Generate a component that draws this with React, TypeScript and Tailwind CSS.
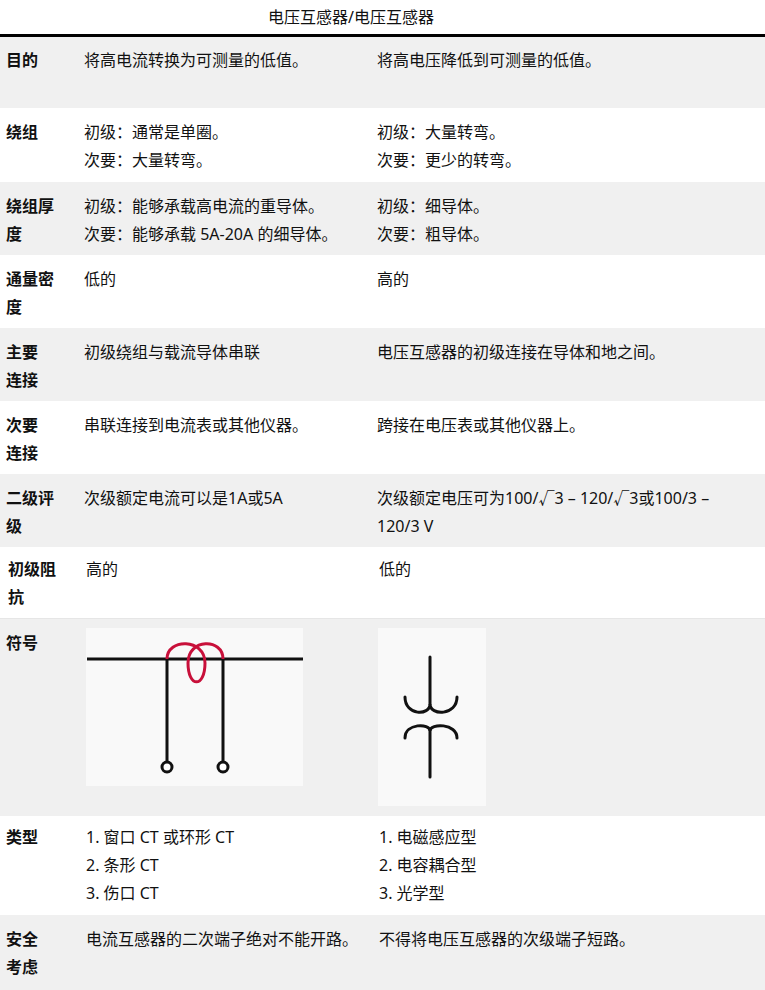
import React from "react";

type Row = {
  key: string;
  label: React.ReactNode;
  left: React.ReactNode;
  right: React.ReactNode;
  h: string;
  pt: string;
  bg: string;
  shift?: boolean;
};

function CtSymbol() {
  return (
    <svg width="217" height="158" viewBox="0 0 217 158" className="block">
      <rect x="0" y="0" width="217" height="158" fill="#f9f9f9" />
      <path d="M1 31 H217" stroke="#111" strokeWidth="3" fill="none" />
      <path d="M81 31 V134 M137 31 V134" stroke="#111" strokeWidth="3" fill="none" />
      <path
        d="M81 31 C81 10 119 10 119 35 C119 60 102 60 102 35 C102 10 137 10 137 31"
        stroke="#c8103a"
        strokeWidth="3"
        fill="none"
      />
      <circle cx="81" cy="139" r="5" stroke="#111" strokeWidth="3" fill="#fff" />
      <circle cx="137" cy="139" r="5" stroke="#111" strokeWidth="3" fill="#fff" />
    </svg>
  );
}

function VtSymbol() {
  return (
    <svg width="108" height="178" viewBox="0 0 108 178" className="block">
      <rect x="0" y="0" width="108" height="178" fill="#f9f9f9" />
      <g stroke="#111" strokeWidth="3" fill="none" strokeLinecap="round">
        <path d="M52 29 V76" />
        <path d="M27 69 C27 88 52 88 52 76 C52 88 79 88 79 69" />
        <path d="M27 110 C27 95 52 95 52 103 C52 95 79 95 79 110" />
        <path d="M52 103 V149" />
      </g>
    </svg>
  );
}

const rows: Row[] = [
  {
    key: "purpose",
    label: "目的",
    left: "将高电流转换为可测量的低值。",
    right: "将高电压降低到可测量的低值。",
    h: "h-[71px]",
    pt: "pt-[9px]",
    bg: "bg-[#f0f0f0]",
  },
  {
    key: "winding",
    label: "绕组",
    left: (
      <>
        初级：通常是单圈。
        <br />
        次要：大量转弯。
      </>
    ),
    right: (
      <>
        初级：大量转弯。
        <br />
        次要：更少的转弯。
      </>
    ),
    h: "h-[74px]",
    pt: "pt-[10px]",
    bg: "bg-white",
  },
  {
    key: "thickness",
    label: "绕组厚度",
    left: (
      <>
        初级：能够承载高电流的重导体。
        <br />
        次要：能够承载 5A-20A 的细导体。
      </>
    ),
    right: (
      <>
        初级：细导体。
        <br />
        次要：粗导体。
      </>
    ),
    h: "h-[73px]",
    pt: "pt-[10px]",
    bg: "bg-[#f0f0f0]",
  },
  {
    key: "flux",
    label: "通量密度",
    left: "低的",
    right: "高的",
    h: "h-[73px]",
    pt: "pt-[10px]",
    bg: "bg-white",
  },
  {
    key: "primary",
    label: (
      <>
        主要
        <br />
        连接
      </>
    ),
    left: "初级绕组与载流导体串联",
    right: "电压互感器的初级连接在导体和地之间。",
    h: "h-[73px]",
    pt: "pt-[10px]",
    bg: "bg-[#f0f0f0]",
  },
  {
    key: "secondary",
    label: (
      <>
        次要
        <br />
        连接
      </>
    ),
    left: "串联连接到电流表或其他仪器。",
    right: "跨接在电压表或其他仪器上。",
    h: "h-[73px]",
    pt: "pt-[10px]",
    bg: "bg-white",
  },
  {
    key: "rating",
    label: "二级评级",
    left: "次级额定电流可以是1A或5A",
    right: (
      <>
        次级额定电压可为100/√3 – 120/√3或100/3 –
        <br />
        120/3 V
      </>
    ),
    h: "h-[73px]",
    pt: "pt-[10px]",
    bg: "bg-[#f0f0f0]",
  },
  {
    key: "impedance",
    label: "初级阻抗",
    left: "高的",
    right: "低的",
    h: "h-[72px]",
    pt: "pt-[8px]",
    bg: "bg-white border-b border-[#e6e6e6]",
    shift: true,
  },
];

const font = "font-['Noto_Sans','Noto_Sans_CJK_SC',sans-serif]";

function Cells({ row }: { row: Row }) {
  const pad = row.shift ? "pl-[8px]" : "pl-[6px]";
  return (
    <div className={`flex ${row.h} ${row.bg} ${row.pt}`}>
      <div className={`w-[78px] shrink-0 ${pad} pr-[14px] font-bold`}>{row.label}</div>
      <div className={`w-[293px] shrink-0 ${pad} pr-[6px]`}>{row.left}</div>
      <div className={`flex-1 ${pad} pr-[6px]`}>{row.right}</div>
    </div>
  );
}

export default function App() {
  return (
    <div className={`w-[765px] h-[990px] overflow-hidden bg-white text-[16px] leading-[28px] text-[#111] ${font}`}>
      <div className="h-[37px] border-b-[3px] border-black">
        <div className="w-[702px] text-center leading-[34px]">电压互感器/电压互感器</div>
      </div>

      {rows.map((r) => (
        <Cells key={r.key} row={r} />
      ))}

      <div className="flex h-[197px] bg-[#f0f0f0] pt-[9px]">
        <div className="w-[78px] shrink-0 pl-[6px] pr-[14px] pt-[1px] font-bold">符号</div>
        <div className="w-[293px] shrink-0 pl-[8px]">
          <CtSymbol />
        </div>
        <div className="flex-1 pl-[7px]">
          <VtSymbol />
        </div>
      </div>

      <div className="flex h-[99px] bg-white pt-[7px]">
        <div className="w-[78px] shrink-0 pl-[6px] pr-[14px] font-bold">类型</div>
        <div className="w-[293px] shrink-0 pl-[8px]">
          <div>1. 窗口 CT 或环形 CT</div>
          <div>2. 条形 CT</div>
          <div>3. 伤口 CT</div>
        </div>
        <div className="flex-1 pl-[8px]">
          <div>1. 电磁感应型</div>
          <div>2. 电容耦合型</div>
          <div>3. 光学型</div>
        </div>
      </div>

      <div className="flex h-[80px] bg-[#f0f0f0] pt-[10px]">
        <div className="w-[78px] shrink-0 pl-[6px] pr-[14px] font-bold">
          安全
          <br />
          考虑
        </div>
        <div className="w-[293px] shrink-0 pl-[8px]">电流互感器的二次端子绝对不能开路。</div>
        <div className="flex-1 pl-[8px]">不得将电压互感器的次级端子短路。</div>
      </div>
    </div>
  );
}
